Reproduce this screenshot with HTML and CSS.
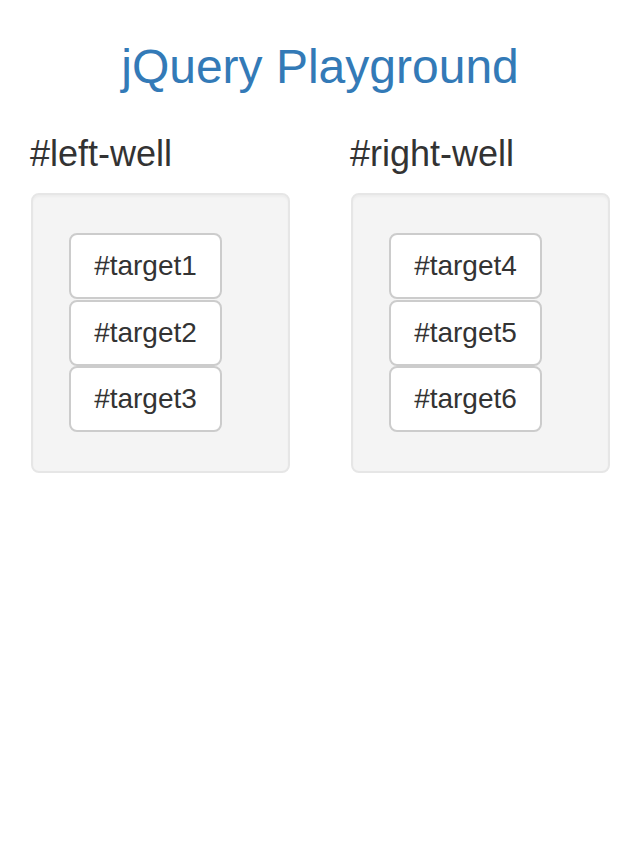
FILE: index.html
```html
<!DOCTYPE html>
<html>
<head>
  <title>jQuery Playground</title>
  <link rel="stylesheet" href="styles.css">
</head>
<body>
  <div class="container">
    <h3 class="title">jQuery Playground</h3>

    <div class="row">
      <!-- Left well -->
      <div class="col">
        <h4>#left-well</h4>
        <div class="well" id="left-well">
          <button class="btn target" id="target1">#target1</button>
          <button class="btn target" id="target2">#target2</button>
          <button class="btn target" id="target3">#target3</button>
        </div>
      </div>

      <!-- Right well -->
      <div class="col">
        <h4>#right-well</h4>
        <div class="well" id="right-well">
          <button class="btn target" id="target4">#target4</button>
          <button class="btn target" id="target5">#target5</button>
          <button class="btn target" id="target6">#target6</button>
        </div>
      </div>
    </div>
  </div>
</body>
</html>
```

FILE: styles.css
```css
body {
  font-family: "Liberation Sans", Arial, sans-serif;
  color: #333;
  background-color: #fff;
  margin: 0;
}

.title {
  color: #337ab7;
  font-size: 48px;
  font-weight: normal;
  line-height: 1.1;
  text-align: center;
  margin: 41px 0 20px;
}

.row {
  display: grid;
  grid-template-columns: 1fr 1fr;
}

.col {
  padding: 0 30px 0 31px;
}

h4 {
  font-size: 36px;
  font-weight: normal;
  line-height: 1.1;
  margin: 20px 0 20px -1px;
}

.well {
  background-color: #f4f4f4;
  border: 2px solid #e6e6e6;
  border-radius: 8px;
  padding: 38px 36px;
  box-shadow: inset 0 2px 2px rgba(0, 0, 0, 0.03);
}

.btn {
  display: flex;
  align-items: center;
  justify-content: center;
  box-sizing: border-box;
  width: 153px;
  height: 66px;
  margin: 0 0 0.5px;
  padding: 0;
  font-family: inherit;
  font-size: 28px;
  color: #333;
  background-color: #fff;
  border: 2px solid #ccc;
  border-radius: 8px;
  cursor: pointer;
}
```
